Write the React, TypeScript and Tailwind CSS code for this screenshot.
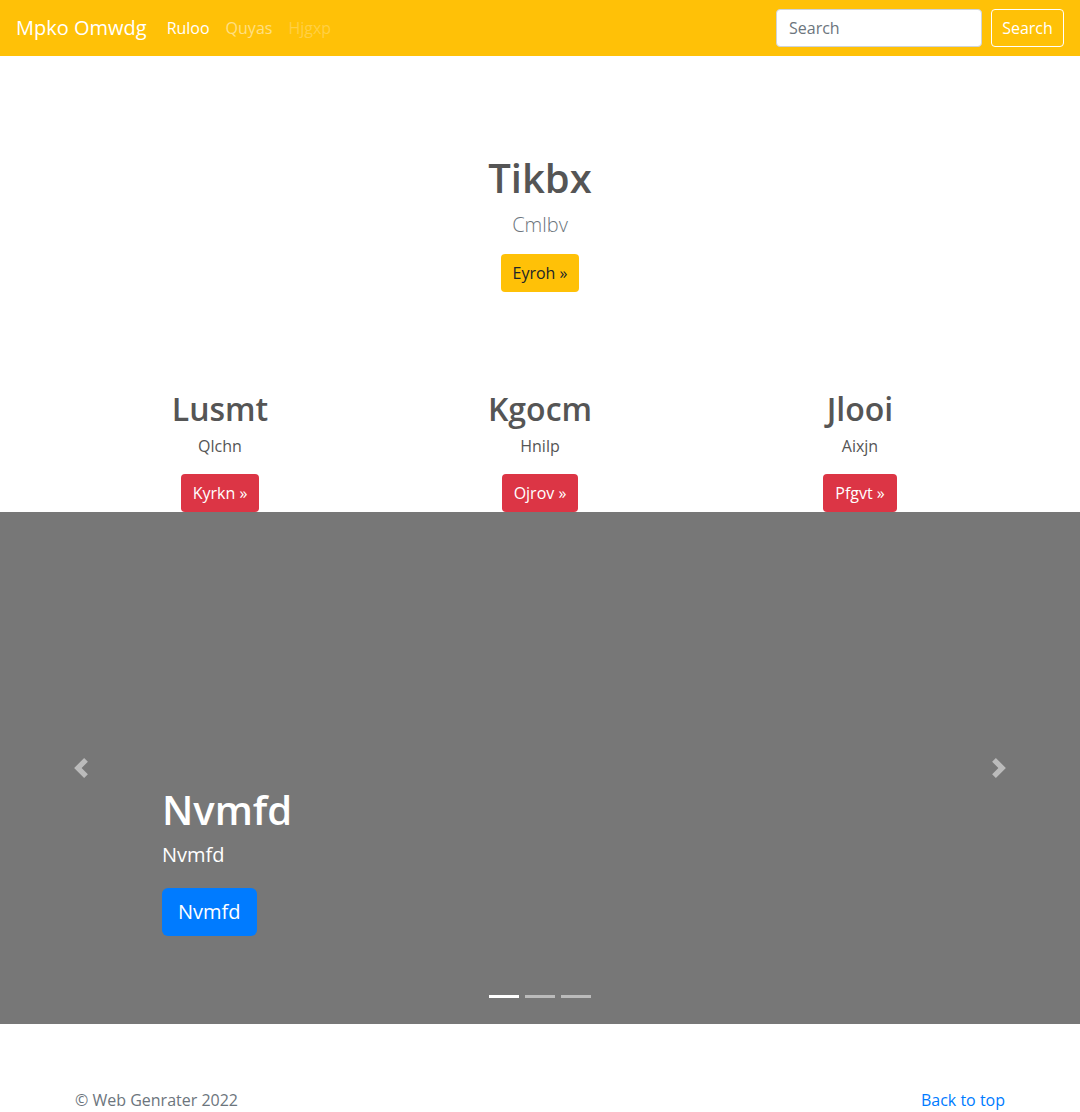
const font = { fontFamily: '"Open Sans", "Noto Sans", sans-serif' };

const features = [
  { title: "Lusmt", text: "Qlchn", cta: "Kyrkn" },
  { title: "Kgocm", text: "Hnilp", cta: "Ojrov" },
  { title: "Jlooi", text: "Aixjn", cta: "Pfgvt" },
];

function Chevron({ dir }: { dir: "left" | "right" }) {
  return (
    <svg width="20" height="20" viewBox="0 0 8 8" fill="#fff" className="opacity-50">
      {dir === "left" ? (
        <path d="M5.25 0l-4 4 4 4 1.5-1.5L4.25 4l2.5-2.5L5.25 0z" />
      ) : (
        <path d="M2.75 0l-1.5 1.5L3.75 4l-2.5 2.5L2.75 8l4-4-4-4z" />
      )}
    </svg>
  );
}

export default function App() {
  return (
    <div className="min-h-screen bg-white text-[#212529] text-base" style={font}>
      {/* Navbar */}
      <nav className="h-14 bg-[#ffc107] flex items-center px-4">
        <span className="text-xl text-white mr-3 leading-[30px]">Mpko Omwdg</span>
        <ul className="flex items-center">
          <li className="px-2 text-white">Ruloo</li>
          <li className="px-2 text-white/50">Quyas</li>
          <li className="px-2 text-white/25">Hjgxp</li>
        </ul>
        <form className="ml-auto flex items-center gap-[9px]">
          <input
            placeholder="Search"
            className="w-[206px] h-[38px] rounded bg-white border border-[#ced4da] px-3 text-base text-[#495057] placeholder:text-[#6c757d] outline-none"
          />
          <button
            type="button"
            className="h-[38px] w-[73px] rounded border border-white text-white text-base"
          >
            Search
          </button>
        </form>
      </nav>

      {/* Jumbotron */}
      <section className="pt-[98px] flex flex-col items-center text-center">
        <h1 className="text-[40px] leading-[48px] font-semibold text-[#555] mb-2">Tikbx</h1>
        <p className="text-xl leading-[30px] font-light text-[#6c757d] mb-[14px]">Cmlbv</p>
        <button className="h-[38px] px-3 rounded bg-[#ffc107] text-[#212529] text-base">
          Eyroh »
        </button>
      </section>

      {/* Features */}
      <section className="mx-auto w-[960px] grid grid-cols-3 pt-[98px]">
        {features.map((f) => (
          <div key={f.title} className="px-[15px] flex flex-col items-center text-center">
            <h2 className="text-[32px] leading-[38px] font-semibold text-[#555] mb-1.5">{f.title}</h2>
            <p className="leading-6 text-[#555] mb-4">{f.text}</p>
            <button className="h-[38px] px-3 rounded bg-[#dc3545] text-white text-base">
              {f.cta} »
            </button>
          </div>
        ))}
      </section>

      {/* Carousel */}
      <section className="relative h-[512px] bg-[#777] flex flex-col justify-end pl-[162px] pb-[88px]">
        <h1 className="text-[40px] leading-[48px] font-semibold text-white mb-1.5">Nvmfd</h1>
        <p className="text-xl leading-[30px] text-white mb-[18px]">Nvmfd</p>
        <div>
          <button className="h-12 px-4 rounded-md bg-[#007bff] text-white text-xl">Nvmfd</button>
        </div>

        <div className="absolute left-0 top-0 bottom-0 w-[162px] flex items-center justify-center">
          <Chevron dir="left" />
        </div>
        <div className="absolute right-0 top-0 bottom-0 w-[162px] flex items-center justify-center">
          <Chevron dir="right" />
        </div>
        <div className="absolute left-0 right-0 bottom-[26px] flex justify-center gap-1.5">
          <span className="w-[30px] h-[3px] bg-white" />
          <span className="w-[30px] h-[3px] bg-white/50" />
          <span className="w-[30px] h-[3px] bg-white/50" />
        </div>
      </section>

      {/* Footer */}
      <footer className="mx-auto w-[960px] px-[15px] pt-16 flex justify-between leading-6">
        <p className="text-[#6c757d]">© Web Genrater 2022</p>
        <a href="#" className="text-[#007bff]">Back to top</a>
      </footer>
    </div>
  );
}
